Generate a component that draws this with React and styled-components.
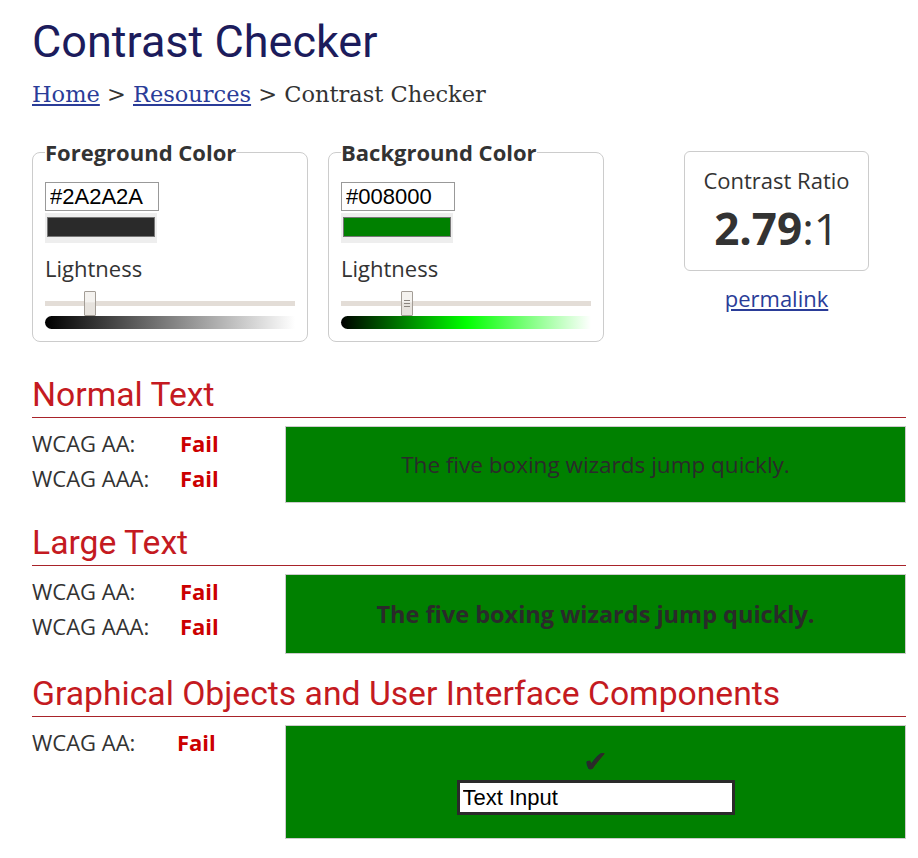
import React from 'react'
import styled, { createGlobalStyle } from 'styled-components'

const GlobalStyle = createGlobalStyle`
    body {
        margin: 0;
        background: #fff;
        font-family: "Open Sans", sans-serif;
        color: #333;
    }
`;

const fg = '#2A2A2A';
const bg = '#008000';

export default function App() {
    return (
        <>
            <GlobalStyle/>
            <Page>
                <Title>Contrast Checker</Title>
                <Breadcrumb>
                    <Crumb href="#">Home</Crumb> &gt; <Crumb href="#">Resources</Crumb> &gt; Contrast Checker
                </Breadcrumb>

                <Pickers>
                    <ColorPicker label="Foreground Color" hex={fg} lightness={16.5}
                        gradient="linear-gradient(to right, #000 0%, #fff 100%)"/>
                    <ColorPicker label="Background Color" hex={bg} lightness={25} grip
                        gradient="linear-gradient(to right, #000 0%, #00ff00 50%, #fff 100%)"/>
                    <RatioColumn>
                        <RatioBox>
                            <RatioLabel>Contrast Ratio</RatioLabel>
                            <RatioValue><b>2.79</b>:1</RatioValue>
                        </RatioBox>
                        <Permalink href="#">permalink</Permalink>
                    </RatioColumn>
                </Pickers>

                <Section>
                    <SectionTitle>Normal Text</SectionTitle>
                    <SectionBody>
                        <Results>
                            <Result label="WCAG AA:"/>
                            <Result label="WCAG AAA:"/>
                        </Results>
                        <Sample height={77}>
                            <SampleText>The five boxing wizards jump quickly.</SampleText>
                        </Sample>
                    </SectionBody>
                </Section>

                <Section>
                    <SectionTitle>Large Text</SectionTitle>
                    <SectionBody>
                        <Results>
                            <Result label="WCAG AA:"/>
                            <Result label="WCAG AAA:"/>
                        </Results>
                        <Sample height={80}>
                            <SampleText large>The five boxing wizards jump quickly.</SampleText>
                        </Sample>
                    </SectionBody>
                </Section>

                <Section>
                    <SectionTitle>Graphical Objects and User Interface Components</SectionTitle>
                    <SectionBody>
                        <Results labelWidth={145}>
                            <Result label="WCAG AA:"/>
                        </Results>
                        <Sample height={114} column>
                            <Check>✔</Check>
                            <DemoInput defaultValue="Text Input"/>
                        </Sample>
                    </SectionBody>
                </Section>
            </Page>
        </>
    )
}

function ColorPicker({ label, hex, lightness, gradient, grip }) {
    return (
        <Fieldset>
            <Legend>{label}</Legend>
            <HexInput defaultValue={hex}/>
            <SwatchWrap>
                <Swatch color={hex}/>
            </SwatchWrap>
            <SliderLabel>Lightness</SliderLabel>
            <Slider>
                <Track/>
                <Thumb style={{ left: `${lightness / 100 * 238}px` }}>
                    {grip && <><Grip/><Grip/><Grip/></>}
                </Thumb>
            </Slider>
            <GradientBar gradient={gradient}/>
        </Fieldset>
    )
}

function Result({ label }) {
    return (
        <ResultRow>
            <ResultLabel>{label}</ResultLabel>
            <Fail>Fail</Fail>
        </ResultRow>
    )
}

const Page = styled.div`
    padding: 15px 12px 20px 32px;
`;

const Title = styled.h1`
    margin: 0;
    font-family: Roboto, sans-serif;
    font-weight: 400;
    font-size: 45px;
    line-height: 53px;
    color: #1c1c5c;
`;

const Breadcrumb = styled.div`
    margin-top: 12px;
    font-family: "DejaVu Serif", serif;
    font-size: 22.5px;
    line-height: 28px;
    color: #333;
`;

const Crumb = styled.a`
    color: #2a3c98;
    text-decoration: underline;
`;

const Pickers = styled.div`
    display: flex;
    align-items: flex-start;
    margin-top: 30px;
`;

const Fieldset = styled.fieldset`
    box-sizing: border-box;
    width: 276px;
    margin: 0 20px 0 0;
    padding: 16px 12px 12px;
    border: 1px solid #ccc;
    border-radius: 8px;
`;

const Legend = styled.legend`
    padding: 0;
    font-weight: 700;
    font-size: 22px;
    line-height: 28px;
    color: #333;
`;

const HexInput = styled.input`
    display: block;
    box-sizing: border-box;
    width: 114px;
    height: 29px;
    padding: 0 4px;
    margin: 0;
    border: 1px solid #999;
    font-family: "Liberation Sans", Arial, sans-serif;
    font-size: 22px;
    color: #000;
`;

const SwatchWrap = styled.div`
    width: 112px;
    height: 30px;
    margin-top: 2px;
    padding: 4px 2px 0;
    box-sizing: border-box;
    background: #eee;
`;

const Swatch = styled.div`
    height: 20px;
    box-sizing: border-box;
    border: 1px solid #777;
    background: ${p => p.color};
`;

const SliderLabel = styled.div`
    margin-top: 10px;
    font-size: 22px;
    line-height: 30px;
    color: #333;
`;

const Slider = styled.div`
    position: relative;
    height: 25px;
    margin-top: 8px;
`;

const Track = styled.div`
    position: absolute;
    left: 0;
    right: 0;
    top: 10px;
    height: 5px;
    background: #e3ddd7;
`;

const Thumb = styled.div`
    position: absolute;
    top: 0;
    width: 12px;
    height: 25px;
    box-sizing: border-box;
    border: 1px solid #a39d96;
    border-radius: 1px;
    background: linear-gradient(#f4f2ef 0%, #f4f2ef 45%, #e6e2dd 46%, #e6e2dd 100%);
    display: flex;
    flex-direction: column;
    align-items: center;
    justify-content: center;
    gap: 2px;
`;

const Grip = styled.span`
    display: block;
    width: 6px;
    height: 1px;
    background: #8a847e;
`;

const GradientBar = styled.div`
    height: 13px;
    border-radius: 7px 0 0 7px;
    background: ${p => p.gradient};
`;

const RatioColumn = styled.div`
    display: flex;
    flex-direction: column;
    align-items: center;
    margin-left: 60px;
    margin-top: 13px;
`;

const RatioBox = styled.div`
    box-sizing: border-box;
    width: 185px;
    height: 120px;
    border: 1px solid #ccc;
    border-radius: 6px;
    padding-top: 13px;
    text-align: center;
    color: #333;
`;

const RatioLabel = styled.div`
    font-size: 22px;
    line-height: 30px;
`;

const RatioValue = styled.div`
    margin-top: 4px;
    font-size: 44px;
    line-height: 58px;
    b {
        font-weight: 700;
    }
`;

const Permalink = styled.a`
    margin-top: 12px;
    font-size: 22px;
    line-height: 30px;
    color: #2a3c98;
    text-decoration: underline;
`;

const Section = styled.section`
    margin-top: 21px;
    &:first-of-type {
        margin-top: 34px;
    }
`;

const SectionTitle = styled.h2`
    margin: 0;
    padding-bottom: 3px;
    border-bottom: 1px solid #a8232a;
    font-family: Roboto, sans-serif;
    font-weight: 400;
    font-size: 33.7px;
    line-height: 38px;
    color: #c41a21;
`;

const SectionBody = styled.div`
    display: flex;
    align-items: flex-start;
    margin-top: 8px;
`;

const Results = styled.div`
    width: 253px;
    flex-shrink: 0;
    --label-width: ${p => p.labelWidth || 148}px;
`;

const ResultRow = styled.div`
    display: flex;
    font-size: 22px;
    line-height: 35px;
`;

const ResultLabel = styled.span`
    width: var(--label-width);
    color: #333;
`;

const Fail = styled.span`
    font-weight: 700;
    color: #cc0000;
`;

const Sample = styled.div`
    flex: 1;
    box-sizing: border-box;
    height: ${p => p.height}px;
    border: 1px solid #ccc;
    background: ${bg};
    display: flex;
    flex-direction: ${p => (p.column ? 'column' : 'row')};
    align-items: center;
    justify-content: center;
`;

const SampleText = styled.div`
    color: ${fg};
    font-size: ${p => (p.large ? '23.5px' : '22.5px')};
    font-weight: ${p => (p.large ? 700 : 400)};
`;

const Check = styled.div`
    font-family: "DejaVu Sans", sans-serif;
    font-size: 30px;
    line-height: 30px;
    color: ${fg};
    margin-top: -2px;
`;

const DemoInput = styled.input`
    box-sizing: border-box;
    width: 278px;
    height: 35px;
    margin-top: 3px;
    padding: 0 3px;
    border: 3px solid ${fg};
    background: #fff;
    font-family: "Liberation Sans", Arial, sans-serif;
    font-size: 22px;
    color: #000;
`;
